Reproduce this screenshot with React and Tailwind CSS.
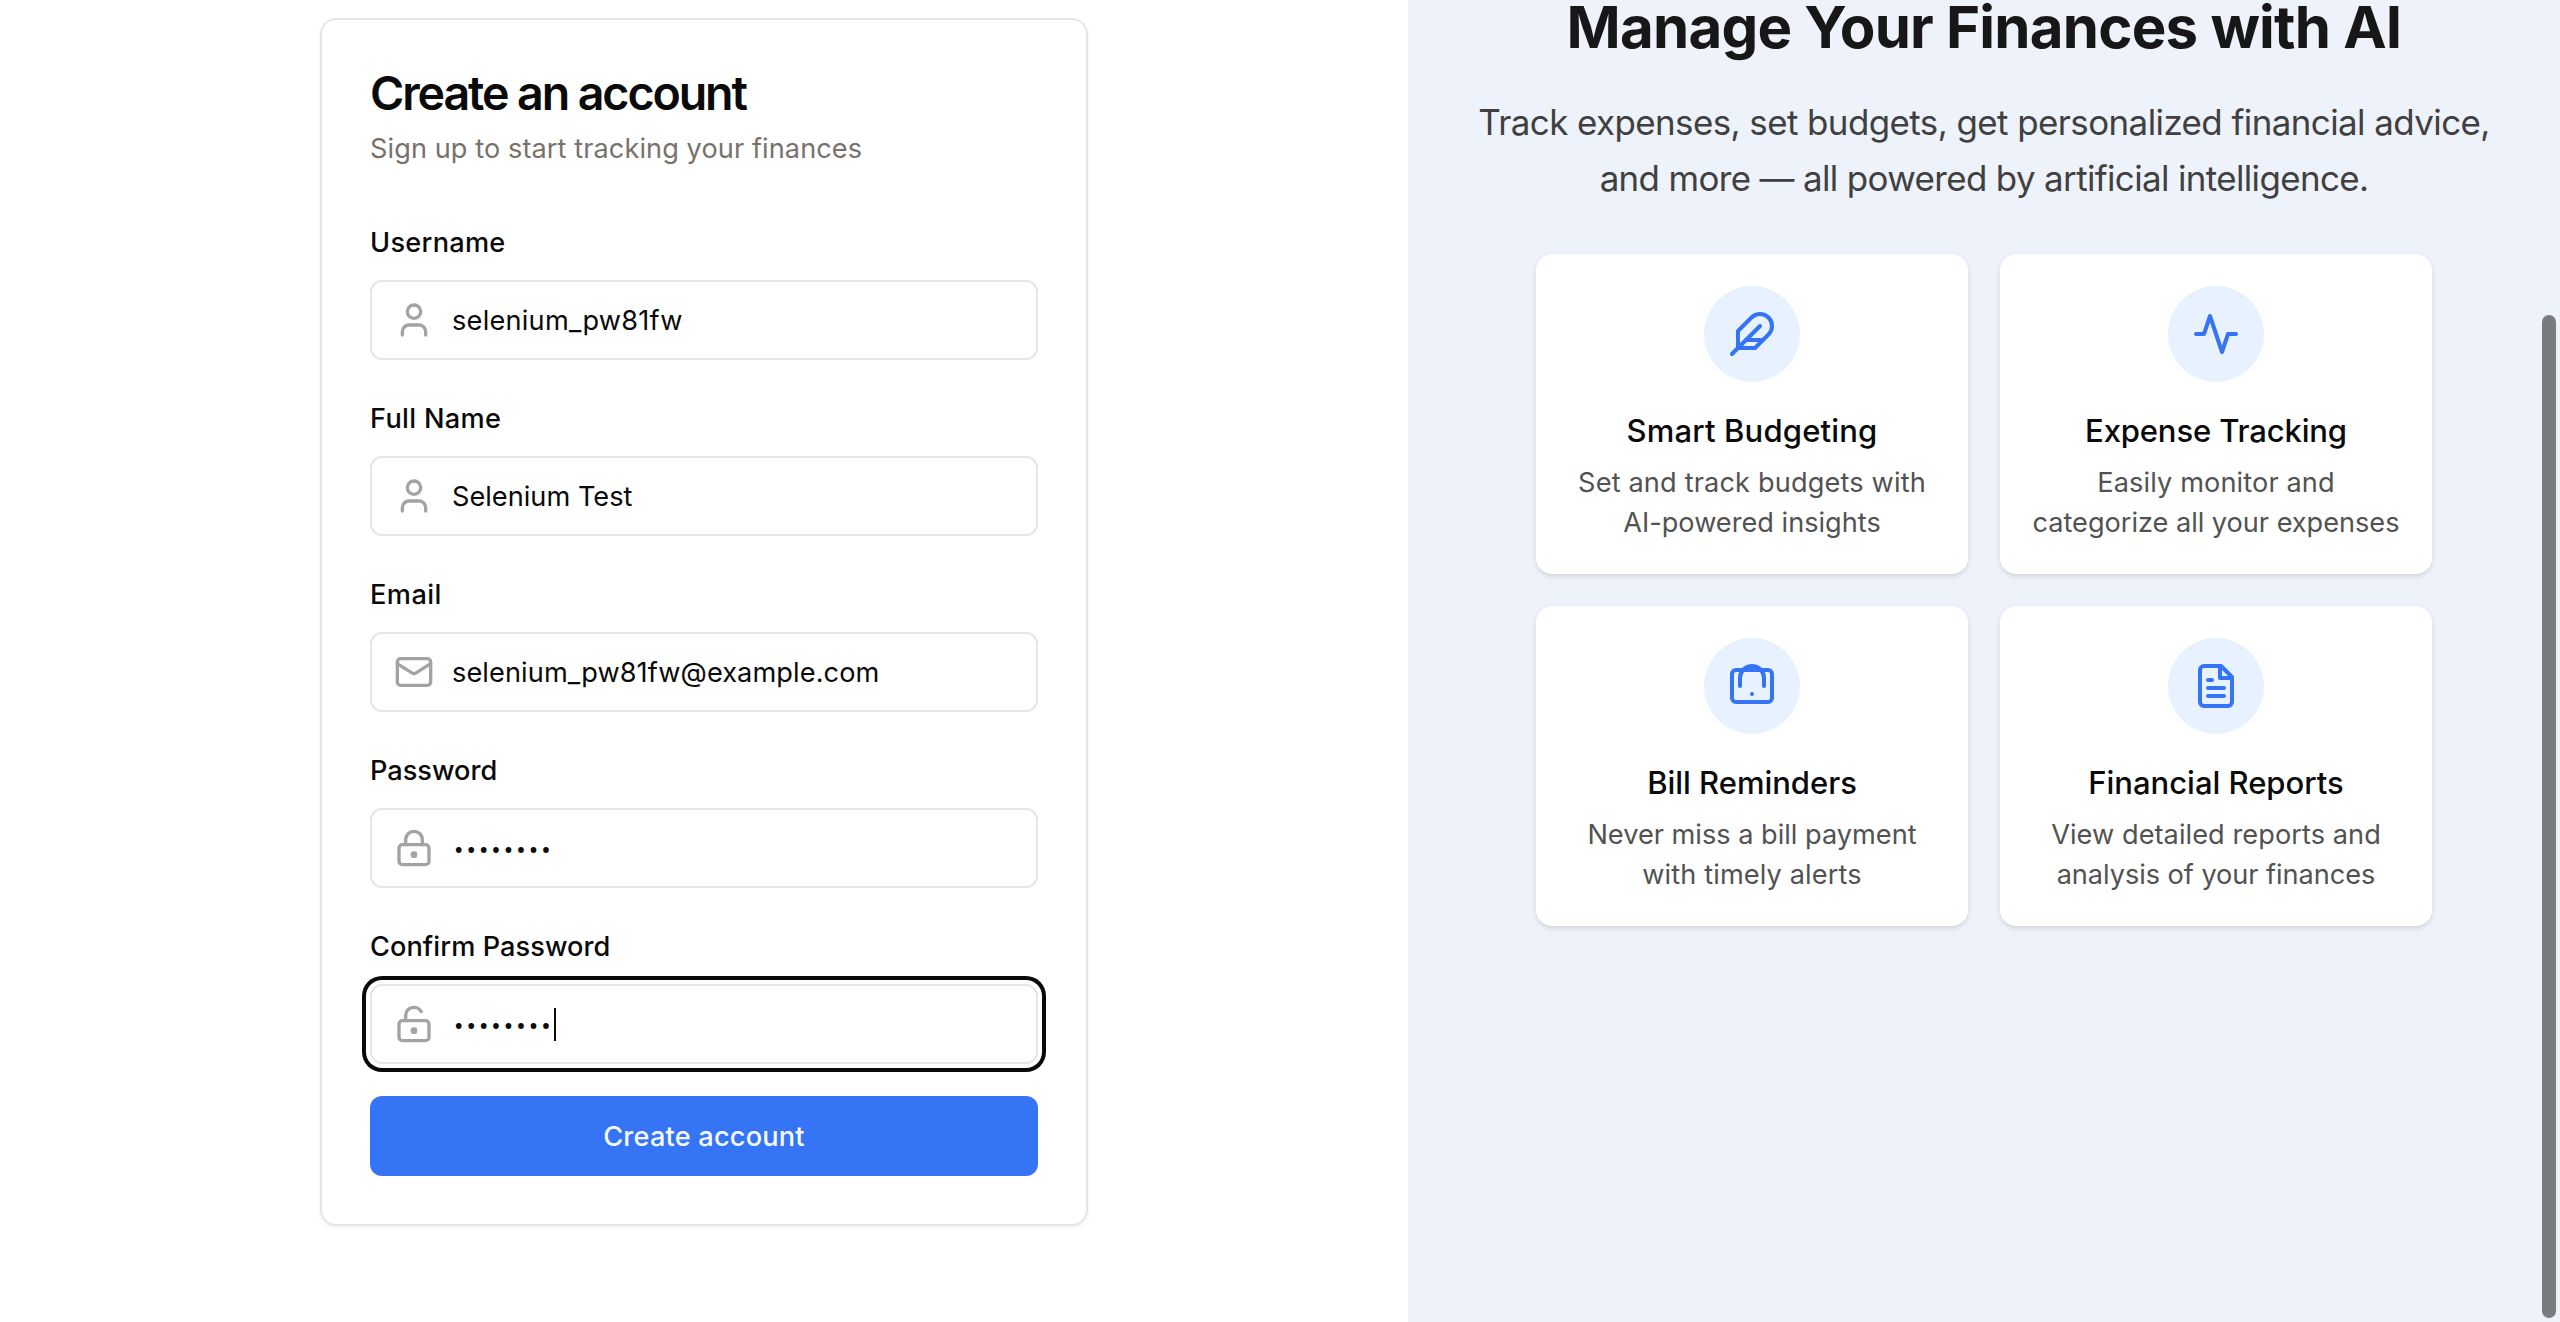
import React from "react";

const stroke = {
  viewBox: "0 0 24 24",
  fill: "none",
  stroke: "currentColor",
  strokeWidth: 2,
  strokeLinecap: "round",
  strokeLinejoin: "round",
};

const UserIcon = () => (
  <svg {...stroke} className="size-10 shrink-0">
    <path d="M19 21v-2a4 4 0 0 0-4-4H9a4 4 0 0 0-4 4v2" />
    <circle cx="12" cy="7" r="4" />
  </svg>
);
const MailIcon = () => (
  <svg {...stroke} className="size-10 shrink-0">
    <rect width="20" height="16" x="2" y="4" rx="2" />
    <path d="m22 7-8.97 5.7a1.94 1.94 0 0 1-2.06 0L2 7" />
  </svg>
);
const LockIcon = () => (
  <svg {...stroke} className="size-10 shrink-0">
    <circle cx="12" cy="16" r="1" />
    <rect x="3" y="10" width="18" height="12" rx="2" />
    <path d="M7 10V7a5 5 0 0 1 10 0v3" />
  </svg>
);
const LockOpenIcon = () => (
  <svg {...stroke} className="size-10 shrink-0">
    <circle cx="12" cy="16" r="1" />
    <rect width="18" height="12" x="3" y="10" rx="2" />
    <path d="M7 10V7a5 5 0 0 1 9.33-2.5" />
  </svg>
);
const FeatherIcon = () => (
  <svg {...stroke} className="size-12">
    <path d="M20.24 12.24a6 6 0 0 0-8.49-8.49L5 10.5V19h8.5z" />
    <line x1="16" x2="2" y1="8" y2="22" />
    <line x1="17.5" x2="9" y1="15" y2="15" />
  </svg>
);
const ActivityIcon = () => (
  <svg {...stroke} className="size-12">
    <path d="M22 12h-4l-3 9L9 3l-3 9H2" />
  </svg>
);
const BillIcon = () => (
  <svg {...stroke} className="size-12">
    <rect width="20" height="16" x="2" y="4" rx="2" />
    <path d="M12 16h.01" />
    <path d="M6 12V8a6 6 0 0 1 12 0v4" />
  </svg>
);
const FileIcon = () => (
  <svg {...stroke} className="size-12">
    <path d="M14.5 2H6a2 2 0 0 0-2 2v16a2 2 0 0 0 2 2h12a2 2 0 0 0 2-2V7.5L14.5 2z" />
    <polyline points="14 2 14 8 20 8" />
    <line x1="16" x2="8" y1="13" y2="13" />
    <line x1="16" x2="8" y1="17" y2="17" />
    <line x1="10" x2="8" y1="9" y2="9" />
  </svg>
);

const plain = "text-[27.16px] pt-0.5";
const dots = "font-['Roboto'] text-[28px] tracking-[3px] pl-0.5 pt-1.5";

const fields = [
  { label: "Username", labelCls: "tracking-[0.28px]", icon: UserIcon, value: "selenium_pw81fw", valueCls: `${plain} tracking-[0.236px]` },
  { label: "Full Name", labelCls: "tracking-[0.33px]", icon: UserIcon, value: "Selenium Test", valueCls: `${plain} tracking-[0.013px]` },
  { label: "Email", labelCls: "tracking-[0.45px]", icon: MailIcon, value: "selenium_pw81fw@example.com", valueCls: `${plain} tracking-[0.09px]` },
  { label: "Password", labelCls: "tracking-[0px]", icon: LockIcon, value: "••••••••", valueCls: dots },
  { label: "Confirm Password", labelCls: "tracking-[0.07px]", icon: LockOpenIcon, value: "••••••••", valueCls: dots, focused: true },
];

const features = [
  {
    icon: FeatherIcon,
    title: "Smart Budgeting",
    titleCls: "tracking-[0.15px]",
    lines: [
      ["Set and track budgets with", "tracking-[0.15px]"],
      ["AI-powered insights", "tracking-[0.003px]"],
    ],
  },
  {
    icon: ActivityIcon,
    title: "Expense Tracking",
    titleCls: "tracking-[-0.15px]",
    lines: [
      ["Easily monitor and", "tracking-[0.109px]"],
      ["categorize all your expenses", "tracking-[-0.03px]"],
    ],
  },
  {
    icon: BillIcon,
    title: "Bill Reminders",
    titleCls: "tracking-[-0.037px]",
    lines: [
      ["Never miss a bill payment", "tracking-[-0.005px]"],
      ["with timely alerts", "tracking-[0.12px]"],
    ],
  },
  {
    icon: FileIcon,
    title: "Financial Reports",
    titleCls: "tracking-[-0.029px]",
    lines: [
      ["View detailed reports and", "tracking-[0.061px]"],
      ["analysis of your finances", "tracking-[-0.051px]"],
    ],
  },
];

function Field({ label, labelCls, icon: Icon, value, valueCls, focused }) {
  return (
    <div className="flex flex-col gap-4">
      <label className={`h-12 text-[27.16px] leading-[54px] font-medium whitespace-nowrap ${labelCls}`}>{label}</label>
      <div
        className={
          focused
            ? "flex h-20 items-center gap-[18px] rounded-xl border-2 border-[#e5e5e5] bg-white pl-[22px] shadow-[0_0_0_4px_#ffffff,0_0_0_8px_#0a0a0a]"
            : "flex h-20 items-center gap-[18px] rounded-xl border-2 border-[#e5e5e5] bg-white pl-[22px]"
        }
      >
        <span className="text-[#a3a3a3]">
          <Icon />
        </span>
        <span className={`leading-10 whitespace-nowrap ${valueCls}`}>{value}</span>
        {focused && <span className="-ml-[18px] h-[33px] w-0.5 bg-[#0a0a0a]" />}
      </div>
    </div>
  );
}

function Feature({ icon: Icon, title, titleCls, lines }) {
  return (
    <div className="flex h-80 flex-col items-center rounded-2xl bg-white p-8 shadow-[0_2px_6px_rgba(0,0,0,0.1),0_2px_4px_-2px_rgba(0,0,0,0.1)]">
      <div className="flex size-24 shrink-0 items-center justify-center rounded-full bg-[#e8f1fe] text-[#3574f5]">
        <Icon />
      </div>
      <h3 className={`mt-6 h-12 text-[31.04px] leading-[49px] font-medium whitespace-nowrap ${titleCls}`}>{title}</h3>
      <p className="mt-[9px] flex flex-col items-center text-[27.16px] leading-10 text-[#525252]">
        {lines.map(([text, cls]) => (
          <span key={text} className={`whitespace-nowrap ${cls}`}>
            {text}
          </span>
        ))}
      </p>
    </div>
  );
}

export default function App() {
  return (
    <div className="relative flex h-[1322px] w-[2560px] overflow-hidden bg-white font-['Inter',sans-serif] text-[#0a0a0a]">
      <main className="flex w-[1408px] shrink-0 justify-center pt-[18px]">
        <div className="flex h-[1208px] w-3xl flex-col rounded-2xl border-2 border-[#e5e5e5] bg-white p-12 shadow-[0_2px_4px_rgba(0,0,0,0.05)]">
          <h1 className="h-12 text-[46.56px] leading-[50px] font-semibold tracking-[-2.09px] whitespace-nowrap">Create an account</h1>
          <p className="mt-[13px] text-[27.16px] leading-10 tracking-[0.075px] text-[#78716c]">Sign up to start tracking your finances</p>
          <form className="mt-[47px] flex flex-col gap-8">
            {fields.map((f) => (
              <Field key={f.label} {...f} />
            ))}
            <button
              type="button"
              className="flex h-20 items-center justify-center rounded-xl bg-[#3574f5] pt-0.5 text-[27.16px] leading-10 font-medium tracking-[0.19px] text-[#f5faff]"
            >
              Create account
            </button>
          </form>
        </div>
      </main>

      <aside className="flex flex-1 flex-col items-center bg-[#eef2fa]">
        <h2 className="h-[62px] shrink-0 text-[58.2px] leading-[54px] font-bold tracking-[-0.78px] whitespace-nowrap text-[#171717]">
          Manage Your Finances with AI
        </h2>
        <p className="mt-8 flex flex-col items-center text-[34.92px] leading-[56px] text-[#404040]">
          <span className="tracking-[-0.57px] whitespace-nowrap">Track expenses, set budgets, get personalized financial advice,</span>
          <span className="tracking-[-0.631px] whitespace-nowrap">and more — all powered by artificial intelligence.</span>
        </p>
        <div className="mt-12 grid w-[896px] grid-cols-2 gap-8">
          {features.map((f) => (
            <Feature key={f.title} {...f} />
          ))}
        </div>
      </aside>

      <div className="absolute top-[315px] right-1 bottom-1 w-3.5 rounded-full bg-[#7a7b7e]" />
    </div>
  );
}
